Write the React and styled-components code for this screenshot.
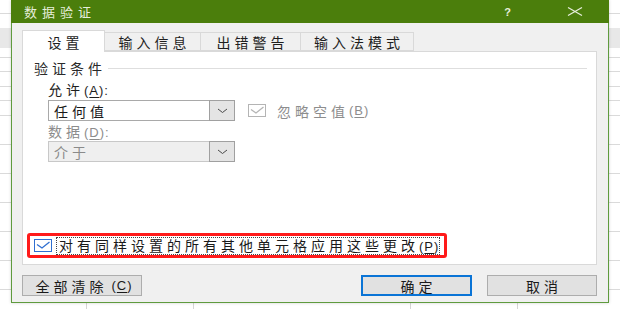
import React from 'react';
import styled, { createGlobalStyle } from 'styled-components';

const Global = createGlobalStyle`
  html, body { margin: 0; padding: 0; }
  body { font-family: "Noto Sans CJK SC", "Liberation Sans", sans-serif; }
`;

const Sheet = styled.div`
  width: 620px;
  height: 309px;
  overflow: hidden;
  box-sizing: border-box;
  padding: 0 11px;
  background-color: #fff;
  background-image:
    linear-gradient(#d6d6d6, #d6d6d6),
    linear-gradient(#d6d6d6, #d6d6d6),
    linear-gradient(#d6d6d6, #d6d6d6),
    linear-gradient(#d6d6d6, #d6d6d6),
    linear-gradient(to bottom, transparent 28px, #e8e8e8 28px, #e8e8e8 48px, transparent 48px),
    repeating-linear-gradient(to bottom, transparent 0, transparent 13.5px, #dadada 13.5px, #dadada 14.5px);
  background-size: 1px 100%, 1px 100%, 1px 100%, 1px 100%, 100% 100%, 100% 100%;
  background-position: 86px 0, 193px 0, 410px 0, 517px 0, 0 0, 0 0;
  background-repeat: no-repeat, no-repeat, no-repeat, no-repeat, no-repeat, repeat;
`;

const Dialog = styled.div`
  width: 598px;
  height: 303px;
  box-sizing: border-box;
  background: #f0f0f0;
  border: 1px solid #5f9b3e;
  border-top: none;
  display: flex;
  flex-direction: column;
  box-shadow: 0 0 3px rgba(0, 0, 0, 0.18);
`;

const TitleBar = styled.div`
  height: 23px;
  flex: none;
  margin: 0 -1px;
  background: #4b7e0c;
  display: flex;
  align-items: center;
  padding: 0 26px 0 13px;
  color: #e6eedb;
`;

const Title = styled.div`
  font-size: 13px;
  letter-spacing: 5px;
  line-height: 16px;
  flex: 1;
`;

const Help = styled.div`
  font-family: "Liberation Sans", sans-serif;
  font-size: 11px;
  font-weight: bold;
  margin-right: 56px;
  line-height: 14px;
`;

const Body = styled.div`
  flex: 1;
  display: flex;
  flex-direction: column;
  padding: 6px 11px 0 10px;
`;

const Tabs = styled.div`
  display: flex;
  align-items: flex-end;
  height: 22px;
  position: relative;
  z-index: 1;
`;

const Tab = styled.div`
  box-sizing: border-box;
  width: ${p => p.$w}px;
  height: ${p => (p.$active ? 22 : 19)}px;
  margin-bottom: ${p => (p.$active ? -1 : 0)}px;
  background: ${p => (p.$active ? '#fff' : '#f0f0f0')};
  border: 1px solid #d9d9d9;
  border-bottom: ${p => (p.$active ? 'none' : '1px solid #d9d9d9')};
  margin-left: ${p => (p.$first ? 0 : -1)}px;
  display: flex;
  align-items: center;
  justify-content: center;
  padding-top: ${p => (p.$active ? 1 : 0)}px;
  font-size: 14px;
  letter-spacing: 4px;
  text-indent: 4px;
  color: #1e1e1e;
`;

const Panel = styled.div`
  box-sizing: border-box;
  height: 214px;
  background: #fff;
  border: 1px solid #d9d9d9;
  display: flex;
  flex-direction: column;
  padding: 8px 9px 6px 3px;
`;

const Group = styled.div`
  display: flex;
  align-items: center;
  height: 16px;
  padding-left: 8px;
  font-size: 14px;
  letter-spacing: 4px;
  color: #2a2a2a;
  line-height: 16px;
  &::after {
    content: '';
    flex: 1;
    height: 1px;
    background: #dedede;
    margin-left: 2px;
  }
`;

const Fields = styled.div`
  display: flex;
  flex-direction: column;
  padding-left: 22px;
`;

const Label = styled.div`
  font-size: 14px;
  letter-spacing: 4px;
  line-height: 16px;
  margin-top: ${p => p.$mt}px;
  color: ${p => (p.$disabled ? '#8c8c8c' : '#1e1e1e')};
`;

const Latin = styled.span`
  letter-spacing: 1px;
  font-size: 13px;
  font-family: "Liberation Sans", "Noto Sans CJK SC", sans-serif;
`;

const Key = styled.span`
  text-decoration: underline;
  text-underline-offset: 2px;
`;

const FieldRow = styled.div`
  display: flex;
  align-items: center;
  margin-top: ${p => p.$mt}px;
`;

const Select = styled.div`
  box-sizing: border-box;
  width: 187px;
  height: 21px;
  display: flex;
  border: 1px solid ${p => (p.$disabled ? '#c8c8c8' : '#a9a9a9')};
  background: ${p => (p.$disabled ? '#efefef' : '#fff')};
`;

const SelectValue = styled.div`
  flex: 1;
  display: flex;
  align-items: center;
  padding-left: 5px;
  font-size: 14px;
  letter-spacing: 4px;
  color: ${p => (p.$disabled ? '#8a8a8a' : '#1a1a1a')};
`;

const Arrow = styled.div`
  width: 26px;
  margin: -1px -1px -1px 0;
  box-sizing: border-box;
  border: 1px solid #a0a0a0;
  background: #e4e4e4;
  display: flex;
  align-items: center;
  justify-content: center;
`;

const CheckLabel = styled.label`
  display: flex;
  align-items: center;
  margin-left: 13px;
  font-size: 14px;
  letter-spacing: 4px;
  color: ${p => (p.$disabled ? '#8d8d8d' : '#1a1a1a')};
`;

const Box = styled.svg`
  flex: none;
  margin-right: ${p => p.$mr}px;
`;

const Highlight = styled.div`
  box-sizing: border-box;
  margin-top: auto;
  margin-left: 1px;
  width: 420px;
  height: 25px;
  border: 3px solid #ff1a1a;
  border-radius: 3px;
  display: flex;
  align-items: center;
  padding-left: 4px;
`;

const FocusText = styled.span`
  font-size: 14px;
  letter-spacing: 4px;
  line-height: 15px;
  color: #1a1a1a;
  outline: 1px dotted #444;
  outline-offset: 0;
  padding: 0 0 0 2px;
`;

const Footer = styled.div`
  display: flex;
  align-items: center;
  margin-top: 10px;
  gap: 15px;
`;

const Button = styled.div`
  box-sizing: border-box;
  width: ${p => p.$w}px;
  height: 21px;
  background: #e1e1e1;
  border: ${p => (p.$default ? '2px solid #0a74d6' : '1px solid #adadad')};
  display: flex;
  align-items: center;
  justify-content: center;
  font-size: 14px;
  letter-spacing: 4px;
  text-indent: 4px;
  color: #1a1a1a;
  margin-left: ${p => (p.$push ? 'auto' : '0')};
`;

const Chevron = () => (
  <svg width="11" height="6" viewBox="0 0 11 6">
    <path d="M1 1 L5.5 4.5 L10 1" fill="none" stroke="#4a4a4a" strokeWidth="1" />
  </svg>
);

const CheckBox = ({ color, mr }) => (
  <Box $mr={mr} width="18" height="13" viewBox="0 0 18 13">
    <rect x="0.5" y="0.5" width="17" height="12" fill="#fff" stroke={color} strokeWidth="1" />
    <path d="M3 5.5 L8 9 L15.5 3" fill="none" stroke={color} strokeWidth="1.3" />
  </Box>
);

export default function App() {
  return (
    <>
      <Global />
      <Sheet>
        <Dialog>
          <TitleBar>
            <Title>数据验证</Title>
            <Help>?</Help>
            <svg width="16" height="9" viewBox="0 0 16 9">
              <path d="M1 0.5 L15 8.5 M15 0.5 L1 8.5" stroke="#e6eedb" strokeWidth="1.2" />
            </svg>
          </TitleBar>
          <Body>
            <Tabs>
              <Tab $w={83} $active $first>设置</Tab>
              <Tab $w={97}>输入信息</Tab>
              <Tab $w={101}>出错警告</Tab>
              <Tab $w={114}>输入法模式</Tab>
            </Tabs>
            <Panel>
              <Group>验证条件</Group>
              <Fields>
                <Label $mt={5}>
                  允许<Latin>(<Key>A</Key>):</Latin>
                </Label>
                <FieldRow $mt={1}>
                  <Select>
                    <SelectValue>任何值</SelectValue>
                    <Arrow><Chevron /></Arrow>
                  </Select>
                  <CheckLabel $disabled>
                    <CheckBox color="#b4b4b4" mr={11} />
                    忽略空值<Latin>(<Key>B</Key>)</Latin>
                  </CheckLabel>
                </FieldRow>
                <Label $mt={2} $disabled>
                  数据<Latin>(<Key>D</Key>):</Latin>
                </Label>
                <FieldRow $mt={0}>
                  <Select $disabled>
                    <SelectValue $disabled>介于</SelectValue>
                    <Arrow><Chevron /></Arrow>
                  </Select>
                </FieldRow>
              </Fields>
              <Highlight>
                <CheckBox color="#2f6fd1" mr={5} />
                <FocusText>
                  对有同样设置的所有其他单元格应用这些更改<Latin>(<Key>P</Key>)</Latin>
                </FocusText>
              </Highlight>
            </Panel>
            <Footer>
              <Button $w={120}>
                全部清除<Latin>(<Key>C</Key>)</Latin>
              </Button>
              <Button $w={111} $default $push>确定</Button>
              <Button $w={110}>取消</Button>
            </Footer>
          </Body>
        </Dialog>
      </Sheet>
    </>
  );
}
